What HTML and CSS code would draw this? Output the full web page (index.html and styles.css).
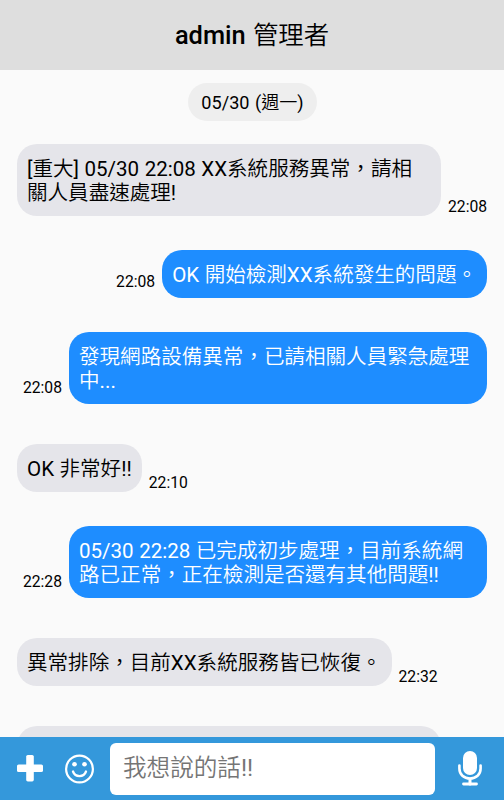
FILE: index.html
```html
<!DOCTYPE html>
<html lang="zh-Hant">
  <head>
    <meta charset="utf-8">
    <title>admin 管理者</title>
    <meta name="viewport" content="width=device-width, initial-scale=1.0">
    <link rel="stylesheet" href="styles.css">
  </head>
  <body>
    <header class="title-bar">
      <h1>admin <span>管理者</span></h1>
    </header>
    <main class="messages">
      <div class="date">05/30 (週一)</div>
      <div class="message received first">
        <p class="bubble">[重大] 05/30 22:08 XX系統服務異常，請相關人員盡速處理!</p>
        <time>22:08</time>
      </div>
      <div class="message sent">
        <p class="bubble">OK 開始檢測XX系統發生的問題。</p>
        <time>22:08</time>
      </div>
      <div class="message sent">
        <p class="bubble">發現網路設備異常，已請相關人員緊急處理中...</p>
        <time>22:08</time>
      </div>
      <div class="message received">
        <p class="bubble">OK 非常好!!</p>
        <time>22:10</time>
      </div>
      <div class="message sent">
        <p class="bubble">05/30 22:28 已完成初步處理，目前系統網路已正常，正在檢測是否還有其他問題!!</p>
        <time>22:28</time>
      </div>
      <div class="message received">
        <p class="bubble">異常排除，目前XX系統服務皆已恢復。</p>
        <time>22:32</time>
      </div>
      <div class="message received">
        <p class="bubble wide"></p>
      </div>
    </main>
    <footer class="toolbar">
      <button class="plus" aria-label="add">
        <svg width="26" height="28" viewBox="0 0 26 28" fill="#fff">
          <rect x="9.2" y="0" width="7.6" height="26.4" rx="1.6"/>
          <rect x="0" y="9.4" width="26" height="7.6" rx="1.6"/>
        </svg>
      </button>
      <button class="smile" aria-label="emoji">
        <svg width="30" height="30" viewBox="0 0 30 30" fill="none" stroke="#fff" stroke-linecap="round">
          <circle cx="15.5" cy="15" r="13.4" stroke-width="2.2"/>
          <circle cx="10.5" cy="10.2" r="2.3" fill="#fff" stroke="none"/>
          <circle cx="20.5" cy="10.2" r="2.3" fill="#fff" stroke="none"/>
          <path d="M9 17.5c1.1 3 3.5 4.6 6.5 4.6s5.4-1.6 6.5-4.6" stroke-width="2.3"/>
        </svg>
      </button>
      <input type="text" placeholder="我想說的話!!">
      <button class="mic" aria-label="voice">
        <svg width="26" height="36" viewBox="0 0 26 36" fill="none" stroke="#fff" stroke-linecap="round">
          <rect x="6" y="0" width="14" height="24" rx="7" fill="#fff" stroke="none"/>
          <path d="M2.4 14.5v3c0 6 4.5 10 10.6 10s10.6-4 10.6-10v-3" stroke-width="2.6"/>
          <path d="M13 28v5" stroke-width="3"/>
          <path d="M6.5 33h13" stroke-width="2.8"/>
        </svg>
      </button>
    </footer>
  </body>
</html>
```
FILE: styles.css
```css
* {
  margin: 0;
  padding: 0;
  box-sizing: border-box;
  font-family: Roboto, "Noto Sans CJK TC DemiLight", "Noto Sans CJK TC", sans-serif;
}
body {
  display: flex;
  flex-direction: column;
  height: 100vh;
  overflow: hidden;
  background-color: #fafafa;
  color: #000;
}
.title-bar {
  display: flex;
  align-items: center;
  justify-content: center;
  flex: none;
  height: 70px;
  background-color: #dedede;
}
h1 {
  font-size: 25.4px;
  font-weight: 500;
  line-height: 30px;
  word-spacing: 1px;
}
h1 span {
  font-weight: 400;
}
.messages {
  display: flex;
  flex-direction: column;
  flex: 1;
  min-height: 0;
  padding: 13px 16px 0 17px;
  overflow: hidden;
}
.date {
  flex: none;
  align-self: center;
  height: 38px;
  padding: 0 13px;
  border-radius: 19px;
  background-color: #eee;
  font-size: 18.1px;
  line-height: 40px;
  word-spacing: 1px;
}
.message {
  display: flex;
  align-items: flex-end;
  flex: none;
  gap: 7px;
}
.bubble {
  min-height: 48px;
  padding: 13px 10px 11px;
  border-radius: 20px;
  font-size: 20.55px;
  line-height: 24px;
  word-spacing: 0.4px;
}
.received {
  margin-top: 40px;
}
.received.first {
  margin-top: 23px;
}
.received .bubble {
  max-width: 424px;
  background-color: #e5e5ea;
}
.sent {
  flex-direction: row-reverse;
  margin-top: 34px;
  margin-right: 1px;
}
.sent .bubble {
  max-width: 418px;
  background-color: #1e8dff;
  color: #fff;
}
.bubble.wide {
  width: 424px;
}
time {
  font-size: 15.7px;
  line-height: 18px;
}
.sent time {
  margin-bottom: 7px;
}
.toolbar {
  display: flex;
  align-items: center;
  flex: none;
  height: 63px;
  padding: 0 21px 0 17px;
  background-color: #3498db;
}
button {
  display: flex;
  border: 0;
  background: none;
}
.smile {
  margin-left: 21px;
}
input {
  width: 325px;
  height: 52px;
  margin: 0 22px 0 16px;
  padding: 0 13px 1px;
  border: 0;
  border-radius: 6px;
  background-color: #fff;
  font-size: 23.6px;
}
input::placeholder {
  color: #757575;
}
```
